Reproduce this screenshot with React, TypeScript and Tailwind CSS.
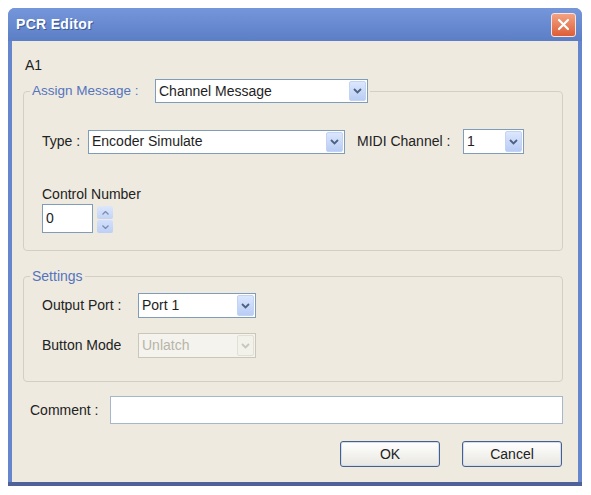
import React from 'react';

const font = { fontFamily: '"Liberation Sans", Arial, sans-serif' };

const Chevron: React.FC<{ color: string }> = ({ color }) => (
  <svg width="9" height="6" viewBox="0 0 9 6">
    <path d="M1 1 L4.5 4.5 L8 1" fill="none" stroke={color} strokeWidth="1.8" />
  </svg>
);

interface ComboProps {
  value: string;
  className: string;
  disabled?: boolean;
}

const Combo: React.FC<ComboProps> = ({ value, className, disabled }) => (
  <div
    className={`flex items-stretch border ${
      disabled ? 'border-[#cac7b9] bg-[#f4f3ee]' : 'border-[#7f9db9] bg-white'
    } ${className}`}
  >
    <div
      className={`flex-1 flex items-center pl-[3px] text-[14px] ${
        disabled ? 'text-[#b8b5a8]' : 'text-[#1e1e1e]'
      }`}
    >
      {value}
    </div>
    <div
      className={`m-[1px] w-[17px] flex items-center justify-center rounded-[2px] border ${
        disabled
          ? 'border-[#e2e0d6] bg-[#f2f1ea]'
          : 'border-[#c3d3f5] bg-gradient-to-b from-[#dce7fd] to-[#b9ccf4]'
      }`}
    >
      <Chevron color={disabled ? '#c9c7bb' : '#4d6185'} />
    </div>
  </div>
);

const XpButton: React.FC<{ label: string }> = ({ label }) => (
  <button className="w-[100px] h-[26px] rounded-[3px] border border-[#4a5f86] bg-gradient-to-b from-white to-[#e8e7e0] shadow-[inset_0_0_0_1px_#cfdcf3] text-[14px] text-[#222]">
    {label}
  </button>
);

export default function App() {
  return (
    <div className="w-[591px] h-[495px] bg-white pt-[8px] pl-[8px]" style={font}>
      <div className="w-[574px] h-[478px] flex flex-col rounded-t-[7px] overflow-hidden bg-[#6585cc]">
        {/* title bar */}
        <div className="h-[33px] shrink-0 flex items-center justify-between pl-[8px] pr-[6px] bg-gradient-to-b from-[#7596da] to-[#5c7ec6]">
          <span className="text-[14px] font-bold text-white tracking-[0.3px] [text-shadow:1px_1px_0_#3d5a9a]">PCR Editor</span>
          <div className="w-[25px] h-[24px] rounded-[3px] border border-[#f7e4dc] bg-gradient-to-b from-[#f2a283] to-[#dc5c36] flex items-center justify-center">
            <svg width="13" height="13" viewBox="0 0 13 13">
              <path d="M2 2 L11 11 M11 2 L2 11" stroke="white" strokeWidth="2.2" strokeLinecap="round" />
            </svg>
          </div>
        </div>

        {/* client area */}
        <div className="flex-1 mx-[4px] bg-[#eeeae0] pt-[16px] pl-[11px] pr-[15px] text-[14px] text-[#222]">
          <div className="pl-[2px] leading-[16px]">A1</div>

          <fieldset className="mt-[6px] border border-[#d3d0c3] rounded-[4px] pb-[17px]">
            <legend className="ml-[6px] px-[2px] flex items-center">
              <span className="w-[123px] text-[#5574bd] text-[13.5px]">Assign Message :</span>
              <Combo value="Channel Message" className="w-[213px] h-[24px]" />
            </legend>

            <div className="mt-[26px] pl-[18px] flex items-center">
              <span className="w-[46px]">Type :</span>
              <Combo value="Encoder Simulate" className="w-[257px] h-[24px]" />
              <span className="ml-[12px] w-[106px]">MIDI Channel :</span>
              <Combo value="1" className="w-[61px] h-[25px]" />
            </div>

            <div className="mt-[32px] pl-[18px] leading-[16px]">Control Number</div>
            <div className="mt-[2px] pl-[18px] flex items-start">
              <div className="w-[51px] h-[29px] border border-[#7f9db9] bg-white flex items-center pl-[3px]">
                0
              </div>
              <div className="ml-[4px] mt-[2px] w-[16px] h-[27px] flex flex-col gap-[1px]">
                <div className="flex-1 rounded-[2px] bg-gradient-to-b from-[#dde7fc] to-[#c2d3f6] flex items-center justify-center">
                  <svg width="7" height="4" viewBox="0 0 7 4">
                    <path d="M0.5 3.5 L3.5 0.5 L6.5 3.5" fill="none" stroke="#7a8cae" strokeWidth="1.3" />
                  </svg>
                </div>
                <div className="flex-1 rounded-[2px] bg-gradient-to-b from-[#d3e0fb] to-[#bccff5] flex items-center justify-center">
                  <svg width="7" height="4" viewBox="0 0 7 4">
                    <path d="M0.5 0.5 L3.5 3.5 L6.5 0.5" fill="none" stroke="#7a8cae" strokeWidth="1.3" />
                  </svg>
                </div>
              </div>
            </div>
          </fieldset>

          <fieldset className="mt-[17px] border border-[#d3d0c3] rounded-[4px] pb-[23px]">
            <legend className="ml-[6px] px-[2px] leading-[16px] text-[#5574bd]">Settings</legend>
            <div className="mt-[9px] pl-[18px] flex items-center">
              <span className="w-[96px]">Output Port :</span>
              <Combo value="Port 1" className="w-[118px] h-[25px]" />
            </div>
            <div className="mt-[15px] pl-[18px] flex items-center">
              <span className="w-[96px]">Button Mode</span>
              <Combo value="Unlatch" className="w-[118px] h-[25px]" disabled />
            </div>
          </fieldset>

          <div className="mt-[14px] flex items-center">
            <span className="pl-[7px] w-[87px]">Comment :</span>
            <div className="flex-1 h-[28px] border border-[#a6b6cc] bg-white" />
          </div>

          <div className="mt-[17px] flex justify-end gap-[22px] pr-[1px]">
            <XpButton label="OK" />
            <XpButton label="Cancel" />
          </div>
        </div>

        <div className="h-[4px] shrink-0 bg-[#4f6199]" />
      </div>
    </div>
  );
}
